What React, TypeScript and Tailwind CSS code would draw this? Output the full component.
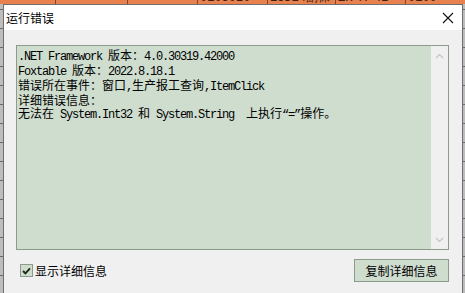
import React from "react";

const mono = { fontFamily: '"Liberation Mono", "Courier New", monospace' };

const L = ({ children }: { children: React.ReactNode }) => (
  <span className="tracking-[-1.2px] text-[12px]" style={mono}>
    {children}
  </span>
);

const C = ({ children }: { children: React.ReactNode }) => (
  <span className="text-[12px] font-['Noto_Sans_CJK_SC',sans-serif]">{children}</span>
);

const bgRows = Array.from({ length: 15 });

const ErrorDialog = () => {
  return (
    <div className="absolute left-[3px] top-[4px] w-[460px] h-[300px] border border-[#6f6f6f] bg-[#f0f0f0] flex flex-col">
      <div className="h-[25px] bg-white flex items-center justify-between pl-[2px] pr-[8px]">
        <span className="text-[12px] leading-[12px] text-black font-['Noto_Sans_CJK_SC',sans-serif]">运行错误</span>
        <svg width="12" height="12" viewBox="0 0 12 12" className="mt-[1px]">
          <path d="M1 1 L11 11 M11 1 L1 11" stroke="#111" strokeWidth="1.1" fill="none" />
        </svg>
      </div>

      <div className="pl-[12px] pt-[15px] flex flex-col">
        <div className="w-[433px] h-[205px] border border-[#8c9b8c] bg-[#cfddcf] flex">
          <div className="flex-1 pt-[2px] pl-[1px] leading-[12px] text-black whitespace-pre">
            <div>
              <L>.NET Framework </L>
              <C>版本：</C>
              <L>4.0.30319.42000</L>
            </div>
            <div>
              <L>Foxtable </L>
              <C>版本：</C>
              <L>2022.8.18.1</L>
            </div>
            <div>
              <C>错误所在事件：窗口</C>
              <L>,</L>
              <C>生产报工查询</C>
              <L>,ItemClick</L>
            </div>
            <div>
              <C>详细错误信息：</C>
            </div>
            <div>
              <C>无法在</C>
              <L> System.Int32 </L>
              <C>和</C>
              <L> System.String  </L>
              <C>上执行</C>
              <L>“=”</L>
              <C>操作。</C>
            </div>
          </div>
          <div className="w-[17px] bg-[#f0f0f0] flex flex-col items-center justify-between pt-[7px] pb-[6px]">
            <svg width="9" height="6" viewBox="0 0 9 6">
              <path d="M1 5 L4.5 1.5 L8 5" stroke="#c4c4c4" strokeWidth="1.2" fill="none" />
            </svg>
            <svg width="9" height="6" viewBox="0 0 9 6">
              <path d="M1 1 L4.5 4.5 L8 1" stroke="#c4c4c4" strokeWidth="1.2" fill="none" />
            </svg>
          </div>
        </div>

        <div className="w-[433px] mt-[9px] h-[23px] flex items-center justify-between">
          <label className="flex items-center gap-[2px] pl-[4px]">
            <span className="w-[13px] h-[13px] border border-[#8c9b8c] bg-[#cfddcf] flex items-center justify-center">
              <svg width="9" height="8" viewBox="0 0 9 8">
                <path d="M1 4 L3.4 6.3 L8 1.3" stroke="#1c2a1c" strokeWidth="1.9" fill="none" />
              </svg>
            </span>
            <C>显示详细信息</C>
          </label>
          <button className="w-[95px] h-[23px] border border-[#8c9b8c] bg-[#cfddcf] flex items-center justify-center text-black">
            <C>复制详细信息</C>
          </button>
        </div>
      </div>
    </div>
  );
};

const App = () => {
  return (
    <div className="relative w-[465px] h-[293px] overflow-hidden bg-[#bdbdbd]">
      <div className="h-[4px] bg-[#e8814e] overflow-hidden flex text-[12px] leading-[12px] text-[#3a2010]" style={mono}>
        <div className="w-[55px] -mt-[8px]" />
        <div className="w-[72px] border-l border-[#7a4a30] -mt-[8px]" />
        <div className="w-[70px] border-l border-[#7a4a30] -mt-[8px]" />
        <div className="w-[70px] border-l border-[#7a4a30] -mt-[8px] pl-[2px]">0103020</div>
        <div className="w-[68px] border-l border-[#7a4a30] -mt-[8px] pl-[2px]">13DE4副保</div>
        <div className="w-[70px] border-l border-[#7a4a30] -mt-[8px] pl-[2px]">ZK A 42</div>
        <div className="flex-1 border-l border-[#7a4a30] -mt-[8px] pl-[2px]">0100</div>
      </div>
      <div className="flex flex-col">
        <div className="h-[6px] border-b border-[#6a6a6a]" />
        {bgRows.map((_, i) => (
          <div key={i} className="h-[19px] border-b border-[#6a6a6a]" />
        ))}
      </div>
      <ErrorDialog />
    </div>
  );
};

export default App;
